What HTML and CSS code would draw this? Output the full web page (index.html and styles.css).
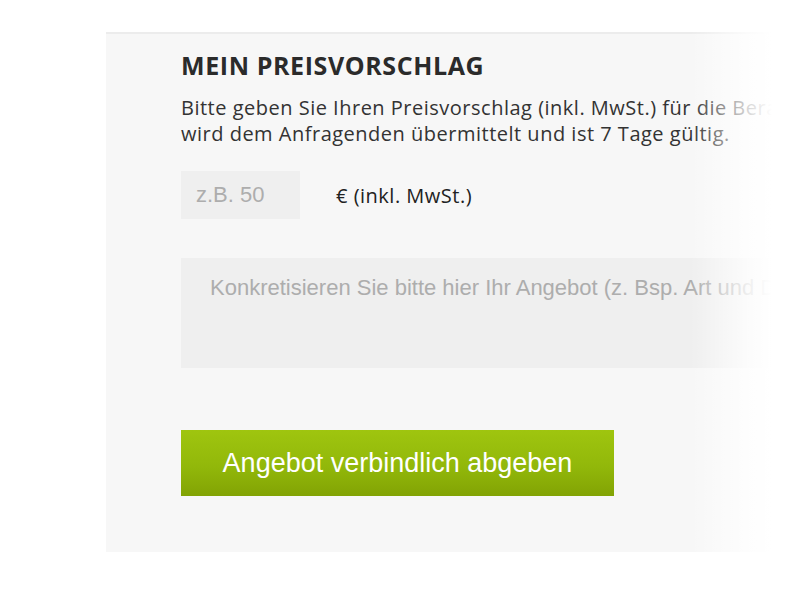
FILE: index.html
```html
<!DOCTYPE html>
<html lang="de">
<head>
<meta charset="utf-8">
<link rel="stylesheet" href="styles.css">
</head>
<body>
<div class="page">
  <section class="panel">
    <h2 class="title">MEIN PREISVORSCHLAG</h2>
    <p class="intro">Bitte geben Sie Ihren Preisvorschlag (inkl. MwSt.) für die Beratung ein. Ihr Angebot<br>wird dem Anfragenden übermittelt und ist 7 Tage gültig.</p>
    <div class="price-row">
      <input class="price-input" type="text" placeholder="z.B. 50">
      <span class="currency">€ (inkl. MwSt.)</span>
    </div>
    <textarea class="details" placeholder="Konkretisieren Sie bitte hier Ihr Angebot (z. Bsp. Art und Dauer der Beratung)"></textarea>
    <button class="submit" type="button">Angebot verbindlich abgeben</button>
  </section>
  <div class="fade"></div>
</div>
</body>
</html>
```

FILE: styles.css
```css
html, body {
  margin: 0;
  padding: 0;
  background: #ffffff;
  overflow: hidden;
  width: 799px;
  height: 599px;
}

.page {
  position: relative;
  width: 799px;
  height: 599px;
  padding-top: 32px;
  box-sizing: border-box;
  overflow: hidden;
}

.panel {
  margin-left: 106px;
  width: 693px;
  height: 520px;
  box-sizing: border-box;
  background: #f7f7f7;
  border-top: 2px solid #ececec;
  padding: 16px 0 0 75px;
  display: flex;
  flex-direction: column;
  align-items: flex-start;
  font-family: "Open Sans", "DejaVu Sans", sans-serif;
  color: #333333;
  overflow: hidden;
}

.title {
  margin: 0;
  font-size: 25px;
  font-weight: 700;
  line-height: 30px;
  color: #2b2b2b;
  letter-spacing: 0.6px;
  white-space: nowrap;
}

.intro {
  margin: 15px 0 0 0;
  font-size: 20px;
  line-height: 26px;
  letter-spacing: 0.5px;
  color: #333333;
  white-space: nowrap;
}

.price-row {
  margin-top: 24px;
  display: flex;
  align-items: center;
  gap: 36px;
}

.price-input {
  width: 119px;
  height: 48px;
  box-sizing: border-box;
  border: none;
  background: #efefef;
  padding: 0 0 0 15px;
  font-family: "Liberation Sans", Arial, sans-serif;
  font-size: 22px;
  color: #333;
  outline: none;
}

.price-input::placeholder {
  color: #adadad;
}

.currency {
  font-size: 20px;
  letter-spacing: 0.5px;
  color: #222222;
  white-space: nowrap;
}

.details {
  margin-top: 39px;
  width: 700px;
  flex: none;
  height: 110px;
  box-sizing: border-box;
  border: none;
  background: #efefef;
  padding: 17px 0 0 29px;
  font-family: "Liberation Sans", Arial, sans-serif;
  font-size: 22px;
  resize: none;
  outline: none;
  white-space: nowrap;
  overflow: hidden;
}

.details::placeholder {
  color: #adadad;
}

.submit {
  margin-top: 62px;
  width: 433px;
  height: 66px;
  border: none;
  background: linear-gradient(to bottom, #9fc50f 0%, #92b80a 55%, #82a304 100%);
  color: #ffffff;
  font-family: "Liberation Sans", Arial, sans-serif;
  font-size: 27px;
  padding: 0;
  cursor: pointer;
}

.fade {
  position: absolute;
  top: 0;
  right: 0;
  width: 109px;
  height: 599px;
  background: linear-gradient(to right,
    rgba(255,255,255,0) 0px,
    rgba(255,255,255,0.2) 15px,
    rgba(255,255,255,0.5) 35px,
    rgba(255,255,255,0.8) 58px,
    #ffffff 82px,
    #ffffff 109px);
  pointer-events: none;
}
```
